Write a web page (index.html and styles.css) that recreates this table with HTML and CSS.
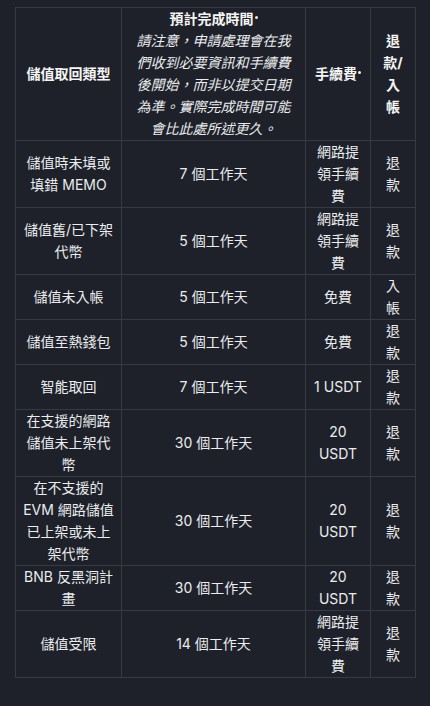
FILE: index.html
```html
<!DOCTYPE html>
<html lang="zh-Hant">
<head>
  <meta charset="UTF-8">
  <title>儲值取回</title>
  <link rel="stylesheet" href="styles.css">
</head>
<body>

<div class="wrap">
  <table class="fees">
    <colgroup>
      <col class="c-type">
      <col class="c-time">
      <col class="c-fee">
      <col class="c-ret">
    </colgroup>
    <thead>
      <tr>
        <th>儲值取回類型</th>
        <th>
          <div class="head-title">預計完成時間<span class="mark"></span></div>
          <div class="note">請注意，申請處理會在我們收到必要資訊和手續費後開始，而非以提交日期為準。實際完成時間可能會比此處所述更久。</div>
        </th>
        <th>手續費<span class="mark"></span></th>
        <th>退款/入帳</th>
      </tr>
    </thead>
    <tbody>
      <tr><td>儲值時未填或填錯 MEMO</td><td>7 個工作天</td><td>網路提領手續費</td><td>退款</td></tr>
      <tr><td>儲值舊/已下架代幣</td><td>5 個工作天</td><td>網路提領手續費</td><td>退款</td></tr>
      <tr><td>儲值未入帳</td><td>5 個工作天</td><td>免費</td><td>入帳</td></tr>
      <tr><td>儲值至熱錢包</td><td>5 個工作天</td><td>免費</td><td>退款</td></tr>
      <tr><td>智能取回</td><td>7 個工作天</td><td>1 USDT</td><td>退款</td></tr>
      <tr><td>在支援的網路儲值未上架代幣</td><td>30 個工作天</td><td>20 USDT</td><td>退款</td></tr>
      <tr><td>在不支援的 EVM 網路儲值已上架或未上架代幣</td><td>30 個工作天</td><td>20 USDT</td><td>退款</td></tr>
      <tr><td>BNB 反黑洞計畫</td><td>30 個工作天</td><td>20 USDT</td><td>退款</td></tr>
      <tr><td>儲值受限</td><td>14 個工作天</td><td>網路提領手續費</td><td>退款</td></tr>
    </tbody>
  </table>
</div>

</body>
</html>
```

FILE: styles.css
```css
body {
  margin: 0;
  background: #1e2129;
  color: #eaecef;
  font-family: Inter, "Noto Sans CJK TC", sans-serif;
  font-size: 14px;
}
.wrap {
  padding: 7px 15px 0 15px;
}
.fees {
  width: 400px;
  border-collapse: collapse;
  table-layout: fixed;
}
.c-type { width: 106px; }
.c-time { width: 184px; }
.c-fee { width: 65px; }
.c-ret { width: 45px; }
.fees th,
.fees td {
  border: 1px solid #353a44;
  padding: 0 8px;
  line-height: 22px;
  text-align: center;
  vertical-align: middle;
}
.fees th:first-child,
.fees td:first-child { padding: 0 6px; }
.fees td:nth-child(3) { padding: 0 7px; }
.fees th:nth-child(4),
.fees td:nth-child(4) { padding: 0 9px; }
.fees th {
  font-weight: 700;
  color: #f5f5f5;
}
.head-title {
  font-weight: 700;
}
.note {
  font-weight: 400;
  font-style: italic;
  color: #eaecef;
}
.mark {
  display: inline-block;
  width: 3px; height: 3px;
  border-radius: 50%;
  background: #eaecef;
  vertical-align: 5px;
  margin-left: 1px;
}
```
